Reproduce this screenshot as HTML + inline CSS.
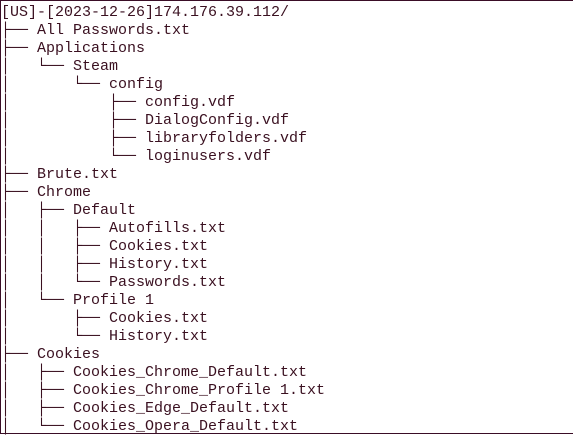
<!DOCTYPE html>
<html><head><meta charset="utf-8"><style>
html,body{margin:0;padding:0;background:#fff;width:573px;height:434px;overflow:hidden}
.wrap{position:absolute;left:0;top:0;width:573px;height:434px;box-sizing:border-box;border-top:1px solid #3a0d26;border-left:1px solid #3a0d26;border-bottom:1px solid #3a0d26}
pre{margin:0;position:absolute;left:1px;top:4px;font-family:"Liberation Mono","DejaVu Sans Mono",monospace;font-size:15px;line-height:18px;color:#3a1020;white-space:pre}
</style></head><body><div class="wrap"></div>
<pre>[US]-[2023-12-26]174.176.39.112/
├── All Passwords.txt
├── Applications
│   └── Steam
│       └── config
│           ├── config.vdf
│           ├── DialogConfig.vdf
│           ├── libraryfolders.vdf
│           └── loginusers.vdf
├── Brute.txt
├── Chrome
│   ├── Default
│   │   ├── Autofills.txt
│   │   ├── Cookies.txt
│   │   ├── History.txt
│   │   └── Passwords.txt
│   └── Profile 1
│       ├── Cookies.txt
│       └── History.txt
├── Cookies
│   ├── Cookies_Chrome_Default.txt
│   ├── Cookies_Chrome_Profile 1.txt
│   ├── Cookies_Edge_Default.txt
│   └── Cookies_Opera_Default.txt</pre>
</body></html>
